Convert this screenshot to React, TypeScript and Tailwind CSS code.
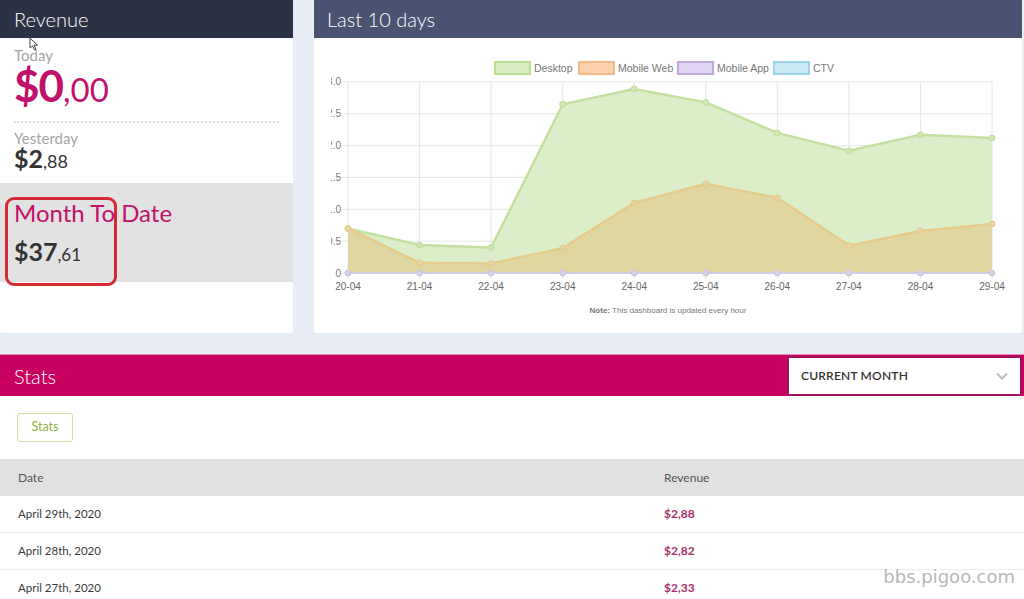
const days = ['20-04', '21-04', '22-04', '23-04', '24-04', '25-04', '26-04', '27-04', '28-04', '29-04'];
const desktop = [0.7, 0.44, 0.4, 2.65, 2.89, 2.68, 2.2, 1.92, 2.17, 2.12];
const mobileWeb = [0.7, 0.16, 0.15, 0.39, 1.1, 1.4, 1.18, 0.43, 0.66, 0.77];

const xAt = (i: number) => 348 + i * 71.556;
const yAt = (v: number) => 273 - v * 63.67;

const areaPath = (data: number[]) =>
  data.map((v, i) => `${i === 0 ? 'M' : 'L'}${xAt(i)},${yAt(v)}`).join(' ') +
  ` L${xAt(data.length - 1)},273 L${xAt(0)},273 Z`;

const linePath = (data: number[]) =>
  data.map((v, i) => `${i === 0 ? 'M' : 'L'}${xAt(i)},${yAt(v)}`).join(' ');

const legend = [
  { label: 'Desktop', x: 495, fill: '#d9edc2', stroke: '#bcdc94' },
  { label: 'Mobile Web', x: 579, fill: '#fcd2ae', stroke: '#f3b987' },
  { label: 'Mobile App', x: 678, fill: '#e0d4f2', stroke: '#bba9da' },
  { label: 'CTV', x: 774, fill: '#c9e9f6', stroke: '#9ed4ea' },
];

function Chart() {
  return (
    <svg width="708" height="295" viewBox="314 38 708 295" className="block" style={{ fontFamily: '"Liberation Sans", Arial, sans-serif' }}>
      <defs>
        <clipPath id="ylabels">
          <rect x="331" y="38" width="700" height="295" />
        </clipPath>
      </defs>

      {/* legend */}
      {legend.map((l) => (
        <g key={l.label}>
          <rect x={l.x} y={62} width={35} height={12} fill={l.fill} stroke={l.stroke} strokeWidth={2} />
          <text x={l.x + 39} y={71.5} fontSize={10.5} fill="#777">{l.label}</text>
        </g>
      ))}

      {/* grid */}
      {[0, 0.5, 1, 1.5, 2, 2.5, 3].map((v) => (
        <line key={v} x1={342} x2={992} y1={yAt(v)} y2={yAt(v)} stroke="#e6e6e6" strokeWidth={1} />
      ))}
      {days.map((d, i) => (
        <line key={d} x1={xAt(i)} x2={xAt(i)} y1={yAt(3)} y2={279} stroke="#e6e6e6" strokeWidth={1} />
      ))}

      {/* y labels, cut at the left edge like the original */}
      <g clipPath="url(#ylabels)">
        {['0', '0.5', '1.0', '1.5', '2.0', '2.5', '3.0'].map((t, i) => (
          <text key={t} x={341} y={yAt(i * 0.5) + 3.5} fontSize={10} fill="#777" textAnchor="end">{t}</text>
        ))}
      </g>

      {/* areas */}
      <path d={areaPath(desktop)} fill="#dcedc9" />
      <path d={linePath(desktop)} fill="none" stroke="#c3e09f" strokeWidth={2.5} />
      <path d={areaPath(mobileWeb)} fill="#e1d6a2" />
      <path d={linePath(mobileWeb)} fill="none" stroke="#e5cb8d" strokeWidth={2.5} />
      <line x1={xAt(0)} x2={xAt(9)} y1={273} y2={273} stroke="#d2cbe2" strokeWidth={2} />

      {desktop.map((v, i) => (
        <circle key={'d' + i} cx={xAt(i)} cy={yAt(v)} r={3} fill="#cfe6b2" stroke="#c0dd9a" />
      ))}
      {mobileWeb.map((v, i) => (
        <circle key={'m' + i} cx={xAt(i)} cy={yAt(v)} r={3} fill="#e8d3a0" stroke="#e3c88c" />
      ))}
      {days.map((d, i) => (
        <circle key={'z' + i} cx={xAt(i)} cy={273} r={3} fill="#d6d0e6" stroke="#cbc4de" />
      ))}

      {/* x labels */}
      {days.map((d, i) => (
        <text key={'l' + d} x={xAt(i)} y={290} fontSize={10} fill="#666" textAnchor="middle">{d}</text>
      ))}

      <text x={668} y={313} fontSize={8} fill="#777" textAnchor="middle">
        <tspan fontWeight="bold">Note:</tspan> This dashboard is updated every hour
      </text>
    </svg>
  );
}

const rows = [
  { date: 'April 29th, 2020', revenue: '$2,88' },
  { date: 'April 28th, 2020', revenue: '$2,82' },
  { date: 'April 27th, 2020', revenue: '$2,33' },
];

export default function App() {
  return (
    <div className="relative h-[599px] w-[1024px] overflow-hidden bg-[#e9edf5] font-['Lato',sans-serif]">
      {/* top row */}
      <div className="flex h-[333px]">
        {/* revenue card */}
        <div className="relative flex w-[293px] flex-col overflow-hidden rounded-b-[3px] bg-white">
          <div className="h-[38px] bg-[#2b3245] pl-[14px] text-[20px] font-light leading-[38px] text-white">Revenue</div>
          <div className="h-[145px] px-[14px] pt-[10px]">
            <div className="text-[15px] leading-[15px] text-[#a5a5a5]">Today</div>
            <div className="flex h-[44px] items-baseline leading-none text-[#c0126a]">
              <span className="text-[44px] font-bold tracking-[-1px]">$0</span>
              <span className="text-[33px]">,00</span>
            </div>
            <div className="mt-[14px] border-t-2 border-dotted border-[#dcdcdc]" />
            <div className="mt-[8px] text-[15px] leading-[15px] text-[#a5a5a5]">Yesterday</div>
            <div className="flex h-[25px] items-baseline leading-none text-[#333]">
              <span className="text-[25px] font-bold">$2</span>
              <span className="text-[18px]">,88</span>
            </div>
          </div>
          <div className="h-[99px] bg-[#e2e2e2] px-[14px] pt-[16px]">
            <div className="text-[24px] leading-[28px] text-[#c0126a]">Month To Date</div>
            <div className="mt-[9px] leading-[30px] text-[#333]">
              <span className="text-[25px] font-bold">$37</span>
              <span className="text-[17px]">,61</span>
            </div>
          </div>
          {/* annotation box */}
          <div className="absolute left-[5px] top-[197px] h-[89px] w-[112px] rounded-[9px] border-[3px] border-[#d42a36]" />
          {/* mouse cursor */}
          <svg className="absolute left-[29px] top-[37px]" width="10" height="14" viewBox="0 0 10 14">
            <path d="M1 1 L1 11 L3.5 8.8 L5.5 13 L7 12.3 L5 8.2 L8.5 8.2 Z" fill="#fff" stroke="#444" strokeWidth="1" />
          </svg>
        </div>

        {/* chart card */}
        <div className="ml-[21px] mr-[2px] flex flex-1 flex-col overflow-hidden rounded-b-[3px] bg-white">
          <div className="h-[38px] bg-[#4a5472] pl-[13px] text-[20px] font-light leading-[38px] text-white">Last 10 days</div>
          <Chart />
        </div>
      </div>

      {/* stats */}
      <div className="mt-[21px] bg-white">
        <div className="flex h-[42px] items-center justify-between border-t border-[#e78ab5] bg-[#c8005f]">
          <div className="pl-[14px] text-[20px] font-light text-white">Stats</div>
          <div className="mr-[2px] flex h-[40px] w-[235px] items-center justify-between border-2 border-[#a3105c] bg-white pl-[12px] pr-[12px]">
            <span className="text-[12px] font-semibold tracking-[0.2px] text-[#333]">CURRENT MONTH</span>
            <svg width="12" height="8" viewBox="0 0 12 8">
              <path d="M1 1.5 L6 6.5 L11 1.5" fill="none" stroke="#bbb" strokeWidth="2" />
            </svg>
          </div>
        </div>
        <div className="px-[17px] pt-[17px]">
          <div className="flex h-[29px] w-[56px] items-center justify-center rounded-[3px] border border-[#c9e2a6] text-[12.5px] text-[#8cb43e]">Stats</div>
        </div>
        <div className="mt-[17px]">
          <div className="grid h-[37px] grid-cols-[664px_1fr] items-center bg-[#e1e1e1] text-[12px] text-[#555]">
            <div className="pl-[18px]">Date</div>
            <div>Revenue</div>
          </div>
          {rows.map((r) => (
            <div key={r.date} className="grid h-[37px] grid-cols-[664px_1fr] items-center border-b border-[#ececec] text-[12px]">
              <div className="pl-[18px] text-[11.5px] text-[#3a3a3a]">{r.date}</div>
              <div className="font-bold text-[#a8306c]">{r.revenue}</div>
            </div>
          ))}
        </div>
      </div>

      <div className="absolute bottom-[9px] right-[9px] font-['DejaVu_Sans',sans-serif] text-[18px] text-[#b8b8b8]">bbs.pigoo.com</div>
    </div>
  );
}
